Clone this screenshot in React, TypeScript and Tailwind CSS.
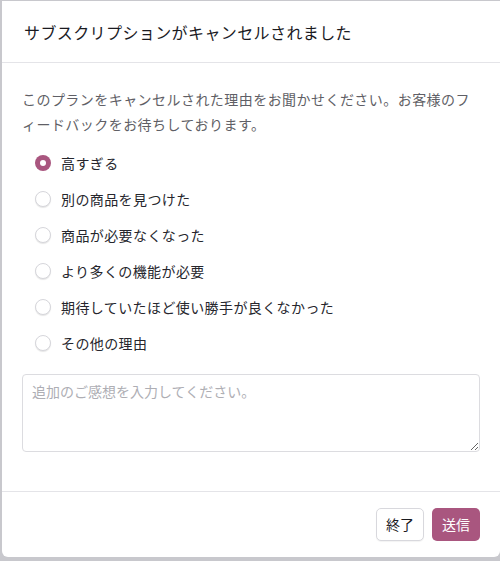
import { useState } from "react";

const reasons = [
  "高すぎる",
  "別の商品を見つけた",
  "商品が必要なくなった",
  "より多くの機能が必要",
  "期待していたほど使い勝手が良くなかった",
  "その他の理由",
];

const font = {
  fontFamily: '"Noto Sans CJK JP", "Noto Sans", sans-serif',
};

export default function App() {
  const [picked, setPicked] = useState(0);

  return (
    <div
      className="h-[561px] w-[500px] bg-[#c8c8cd] pl-[2px] pt-px pb-[4px]"
      style={font}
    >
      <div className="flex h-full flex-col rounded-b-[6px] bg-white">
        <div className="flex h-[62px] items-center border-b border-[#e4e4e8] px-[22px]">
          <h1 className="text-[16px] tracking-[0.4px] text-[#1a1a1f]">
            サブスクリプションがキャンセルされました
          </h1>
        </div>

        <div className="flex flex-1 flex-col px-5 pt-6">
          <p className="text-[14px] leading-[25px] tracking-[0.45px] text-[#5f5f66]">
            このプランをキャンセルされた理由をお聞かせください。お客様のフィードバックをお待ちしております。
          </p>

          <div className="mt-2 ml-[13px] flex flex-col">
            {reasons.map((r, i) => (
              <label
                key={r}
                className="flex h-9 cursor-pointer items-center gap-[10px]"
                onClick={() => setPicked(i)}
              >
                {picked === i ? (
                  <span className="flex h-4 w-4 items-center justify-center rounded-full bg-[#a9567f]">
                    <span className="h-[6px] w-[6px] rounded-full bg-white" />
                  </span>
                ) : (
                  <span className="h-4 w-4 rounded-full border border-[#d6d6db] bg-white shadow-[0_1px_1px_rgba(0,0,0,0.1)]" />
                )}
                <span className="text-[14px] tracking-[0.4px] text-[#26262d]">{r}</span>
              </label>
            ))}
          </div>

          <textarea
            className="mt-[13px] h-[78px] w-full rounded-[4px] border border-[#dcdce0] px-[9px] py-[6px] text-[14px] text-[#333] placeholder:text-[#aeaeb4] outline-none"
            placeholder="追加のご感想を入力してください。"
            style={font}
          />
        </div>

        <div className="flex h-[66px] items-center justify-end gap-2 border-t border-[#e4e4e8] px-5 pb-px">
          <button className="h-[33px] rounded-[5px] border border-[#d8d8dd] bg-white px-[9px] text-[14px] text-[#1a1a1f] shadow-[0_1px_1px_rgba(0,0,0,0.05)]">
            終了
          </button>
          <button className="h-[33px] rounded-[5px] bg-[#a9567f] px-[10px] text-[14px] text-white">
            送信
          </button>
        </div>
      </div>
    </div>
  );
}
